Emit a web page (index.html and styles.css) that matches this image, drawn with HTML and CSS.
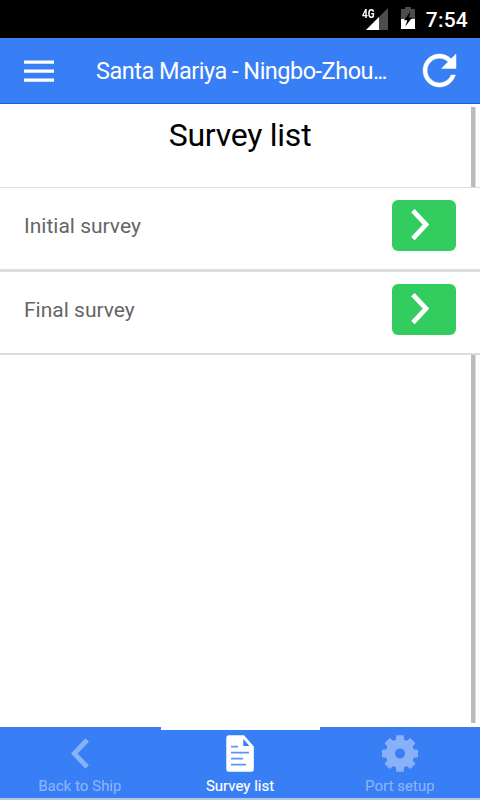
FILE: index.html
```html
<!DOCTYPE html>
<html lang="en">
<head>
<meta charset="utf-8">
<title>Survey list</title>
<link rel="stylesheet" href="styles.css">
</head>
<body>
<div class="status">
  <div class="signal">
    <span class="net">4G</span>
    <svg width="22" height="22" viewBox="0 0 22 22"><path d="M22 0V22H0z" fill="#4d4d4d"/><path d="M13 9V22H0z" fill="#fff"/></svg>
  </div>
  <svg class="battery" width="14" height="22" viewBox="0 0 14 22"><path d="M0 2H4V0H10V2H14V12H0z" fill="#4d4d4d"/><path d="M0 12H14V22H0z" fill="#fff"/><path d="M9.5 4.5L3 13.2H6.3L4.3 19.5L11.2 10.5H7.9z" fill="#000"/></svg>
  <span class="clock">7:54</span>
</div>
<header class="bar">
  <svg class="menu" width="30" height="22" viewBox="0 0 30 22"><path d="M0 .5H30V3.8H0zM0 9.5H30V12.8H0zM0 18.5H30V21.8H0z" fill="#fff"/></svg>
  <h1 class="title">Santa Mariya - Ningbo-Zhou<span class="dots">...</span></h1>
  <svg class="refresh" width="33" height="33" viewBox="80 80 352 352"><path fill="#fff" stroke="#fff" stroke-width="5" d="M256,388c-72.597,0-132-59.405-132-132c0-72.601,59.403-132,132-132c36.3,0,69.299,15.4,92.406,39.601L278,234h154V80l-51.698,51.702C348.406,99.798,304.406,80,256,80c-96.797,0-176,79.203-176,176s78.094,176,176,176c81.045,0,148.287-54.134,169.401-128H378.85C360.105,353.561,311.712,388,256,388z"/></svg>
</header>
<main class="content">
  <h2 class="heading">Survey list</h2>
  <div class="row">
    <span>Initial survey</span>
    <button class="go" aria-label="Open initial survey"><svg width="20" height="34" viewBox="0 0 20 34"><path d="M1.9 2.6L15 16.6L1.9 30.6" fill="none" stroke="#fff" stroke-width="4.8"/></svg></button>
  </div>
  <div class="row last">
    <span>Final survey</span>
    <button class="go" aria-label="Open final survey"><svg width="20" height="34" viewBox="0 0 20 34"><path d="M1.9 2.6L15 16.6L1.9 30.6" fill="none" stroke="#fff" stroke-width="4.8"/></svg></button>
  </div>
  <div class="scrollbar"></div>
</main>
<nav class="tabs">
  <div class="tab">
    <svg width="36" height="37" viewBox="0 0 36 37"><path d="M25.2 5L12.2 18.5L25.2 32" fill="none" stroke="#fff" stroke-width="4.8"/></svg>
    <span>Back to Ship</span>
  </div>
  <div class="tab active">
    <svg width="36" height="37" viewBox="0 0 36 37"><path fill="#fff" fill-rule="evenodd" d="M6.5 .3H22L31.8 11.5V34.3Q31.8 36.8 29.3 36.8H6.5Q4.3 36.8 4.3 34.3V2.8Q4.3 .3 6.5 .3zM21.3 4V11H27.5z"/><path d="M9 11.7H16M9 17.7H27M9 23.7H21M9 29.7H24" stroke="#5c94f7" stroke-width="1.8"/></svg>
    <span>Survey list</span>
  </div>
  <div class="tab">
    <svg width="36" height="37" viewBox="-18 -18.5 36 37"><defs><mask id="hole" maskUnits="userSpaceOnUse" x="-19" y="-19" width="38" height="38"><rect x="-19" y="-19" width="38" height="38" fill="#fff"/><circle r="5" fill="#000"/></mask></defs><g fill="#fff" mask="url(#hole)"><circle r="14.3"/><path id="t" d="M-3.7 -18.2H3.7L4.4 -10H-4.4zM-3.7 18.2H3.7L4.4 10H-4.4z"/><use href="#t" transform="rotate(45)"/><use href="#t" transform="rotate(90)"/><use href="#t" transform="rotate(135)"/></g></svg>
    <span>Port setup</span>
  </div>
</nav>
</body>
</html>
```
FILE: styles.css
```css
* { box-sizing: border-box; }
body {
  margin: 0;
  width: 480px;
  height: 800px;
  display: flex;
  flex-direction: column;
  overflow: hidden;
  background: #fff;
  font-family: Roboto, "Liberation Sans", sans-serif;
}
.status {
  height: 38px;
  flex: none;
  background: #000;
  color: #fff;
  display: flex;
  justify-content: flex-end;
  align-items: flex-start;
  padding: 7px 12px 0 0;
}
.signal { display: flex; padding-top: 1px; }
.net { font-size: 12px; line-height: 12px; font-weight: 700; width: 4px; transform: scaleX(.84); transform-origin: 0 0; }
.battery { margin: 0 11px 0 13px; }
.clock { font-size: 21px; line-height: 26px; font-weight: 500; letter-spacing: .2px; }
.bar {
  height: 66px;
  flex: none;
  background: #387ef5;
  border-bottom: 1px solid #0c60ee;
  display: flex;
  align-items: center;
  padding: 0 24px;
}
.menu { flex: none; }
.title {
  margin: 0 39px 0 42px;
  width: 288px;
  white-space: nowrap;
  font-size: 23.5px;
  font-weight: 400;
  line-height: 64px;
  letter-spacing: -.5px;
  color: #fff;
}
.dots { letter-spacing: -2px; }
.refresh { flex: none; overflow: visible; }
.content { flex: 1; position: relative; }
.heading {
  margin: 0;
  height: 83px;
  text-align: center;
  font-size: 32px;
  font-weight: 400;
  line-height: 62px;
  letter-spacing: -.25px;
  color: #000;
}
.row {
  position: relative;
  z-index: 1;
  height: 85px;
  background: #fff;
  border-top: 1px solid #ddd;
  border-bottom: 3px solid #ddd;
  display: flex;
  align-items: flex-start;
  justify-content: space-between;
  padding: 12px 24px 0;
  font-size: 21px;
  line-height: 52px;
  color: #666;
}
.row.last { height: 83px; border-top: 0; border-bottom-width: 2px; }
.go {
  width: 64px;
  height: 51px;
  border: 0;
  border-radius: 6px;
  background: #33cd5f;
  padding: 8px 0 0 19px;
  display: flex;
}
.scrollbar {
  position: absolute;
  top: 3px;
  right: 4px;
  bottom: 4px;
  width: 5px;
  background: #bbb;
  border-right: 1px solid #ddd;
}
.tabs {
  height: 73px;
  flex: none;
  background: #387ef5;
  border-bottom: 2px solid #b2c8e0;
  display: flex;
}
.tab {
  flex: 1;
  display: flex;
  flex-direction: column;
  align-items: center;
  padding-top: 8px;
  color: #fff;
  font-size: 15px;
  line-height: 20px;
  -webkit-text-stroke: .15px #fff;
}
.tab span { padding-top: 4px; }
.tab svg, .tab span { opacity: .4; flex: none; }
.tab.active { position: relative; }
.tab.active svg, .tab.active span { opacity: 1; }
.tab.active::before {
  content: "";
  position: absolute;
  top: 0;
  left: .5px;
  right: .5px;
  height: 2.5px;
  background: #fff;
}
```
